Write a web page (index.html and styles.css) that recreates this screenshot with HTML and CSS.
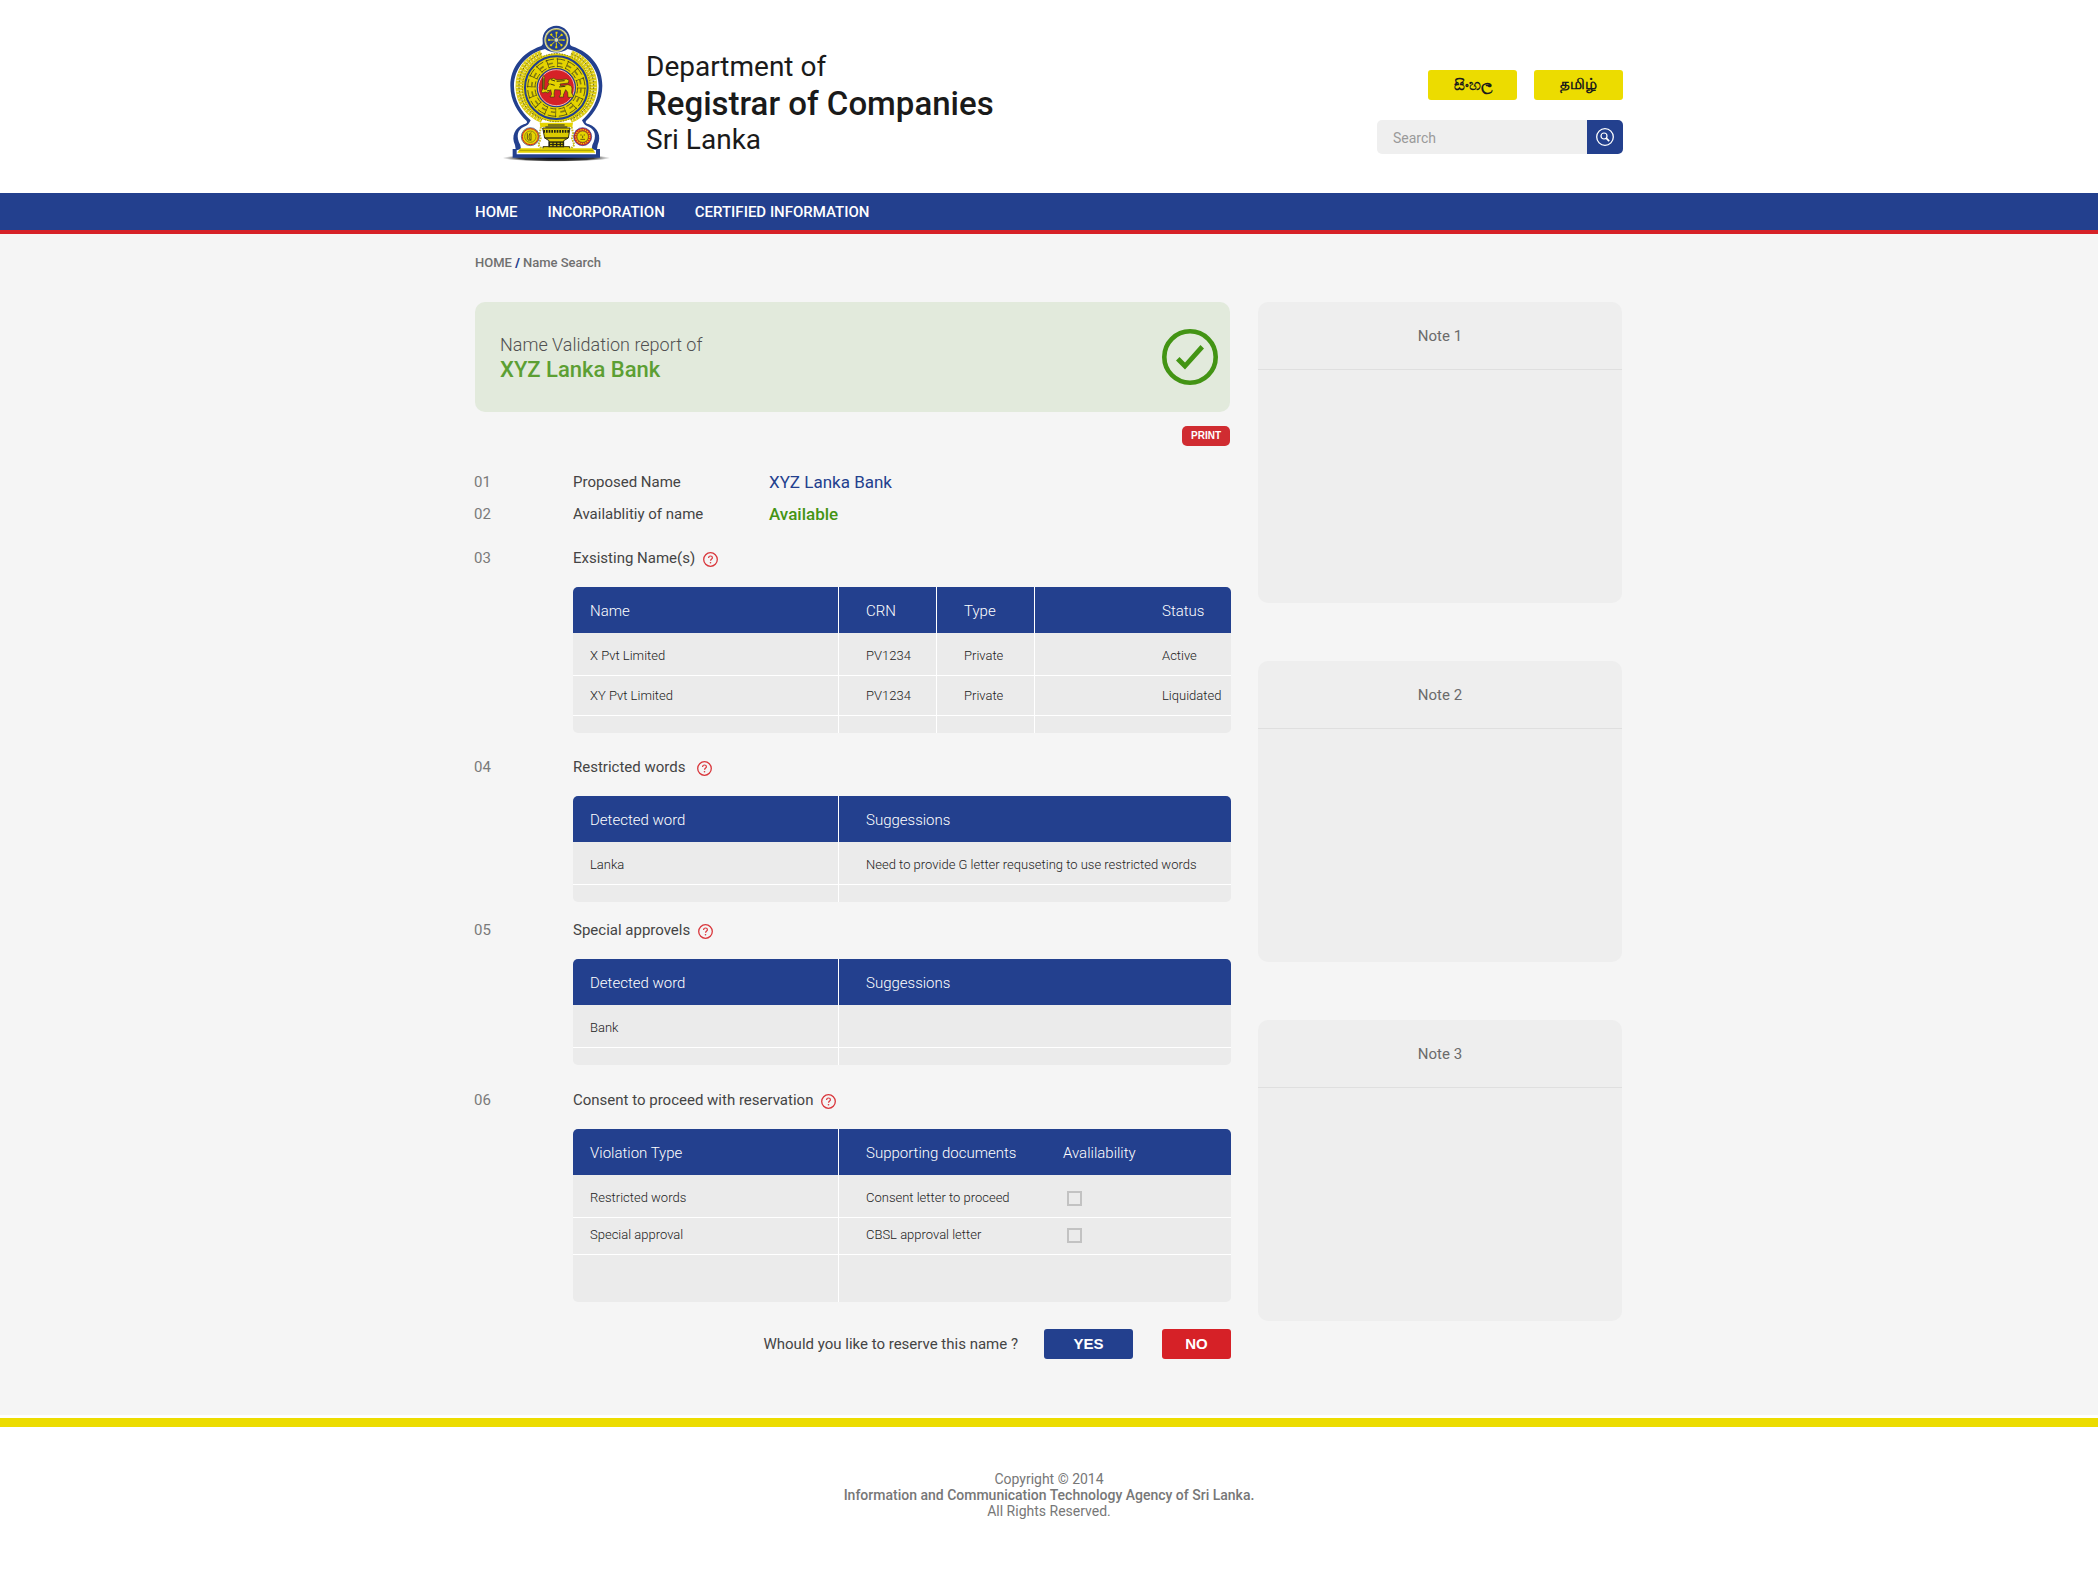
FILE: index.html
```html
<!DOCTYPE html>
<html lang="en">
<head>
<meta charset="utf-8">
<meta name="viewport" content="width=device-width, initial-scale=1">
<title>Name Search - Department of Registrar of Companies</title>
<link rel="stylesheet" href="styles.css">
</head>
<body>
<svg width="0" height="0" class="sprite" aria-hidden="true">
  <symbol id="help" viewBox="0 0 15 15">
    <circle cx="7.5" cy="7.5" r="6.8" fill="none" stroke="#d9363b" stroke-width="1.3"/>
    <path d="M5.600 5.900c0-1.200.8-1.900 1.900-1.900s1.900.7 1.900 1.700c0 1.300-1.800 1.400-1.800 3" fill="none" stroke="#d9363b" stroke-width="1.2"/>
    <circle cx="7.500" cy="10.700" r=".8" fill="#d9363b"/>
  </symbol>
</svg>

<header class="header">
  <div class="wrap header-row">
    <a class="brand" href="#">
      <svg class="emblem" viewBox="0 0 420 510" role="img" aria-label="Emblem of Sri Lanka">
        <defs>
          <radialGradient id="shadow"><stop offset="0" stop-color="#000"/><stop offset=".7" stop-color="#222" stop-opacity=".9"/><stop offset="1" stop-color="#555" stop-opacity="0"/></radialGradient>
        </defs>
        <ellipse cx="199" cy="444" rx="162" ry="11" fill="url(#shadow)"/>
        <path d="M158 95C155 66 176 47 199 47s44 19 41 48c-1 7 0 11 6 14 60 20 91 66 91 118 0 45-22 80-49 106-3 5 0 8 9 10 27 10 38 37 26 62l-2 12h9v26H68v-26h9l-2-12c-12-25-1-52 26-62 9-2 12-5 9-10-27-26-49-61-49-106 0-52 33-98 91-118 6-3 7-7 6-14z" fill="#23408e"/>
        <path d="M165 117c-54 13-93 58-93 111 0 42 20 75 50 103-7 14-10 16-20 19-20 9-25 29-11 55l2 12-13 4v12h238v-12l-13-4 2-12c14-26 9-46-11-55-10-3-13-5-20-19 30-28 50-61 50-103 0-53-39-98-93-111-18 14-50 14-68 0z" fill="#fff"/>
        <circle cx="199" cy="90" r="36" fill="#d8d7b2"/>
        <circle cx="199" cy="90" r="32" fill="#23408e" stroke="#d9cc1c" stroke-width="2"/>
        <g stroke="#e5d400" stroke-width="3"><path d="M199 68v44M177 90h44M184 75l30 30M184 105l30-30"/></g>
        <circle cx="199" cy="90" r="22" fill="none" stroke="#e5d400" stroke-width="6" stroke-dasharray="6 11.28" stroke-dashoffset="3"/>
        <circle cx="199" cy="90" r="7" fill="#d8d7b2" stroke="#23408e" stroke-width="2"/>
        <g fill="none">
          <path d="M155 131C108 148 86 188 87 232c2 45 28 77 70 97M243 131c47 17 69 57 68 101-2 45-28 77-70 97" stroke="#dccb12" stroke-width="21"/>
          <path d="M155 131C108 148 86 188 87 232c2 45 28 77 70 97M243 131c47 17 69 57 68 101-2 45-28 77-70 97" stroke="#f6f3c4" stroke-width="17" stroke-dasharray="2 8"/>
          <path d="M155 131C108 148 86 188 87 232c2 45 28 77 70 97M243 131c47 17 69 57 68 101-2 45-28 77-70 97" stroke="#6e6a19" stroke-width="3" stroke-dasharray="5 5"/>
        </g>
        <circle cx="199" cy="233" r="103" fill="#e5d400"/>
        <circle cx="199" cy="233" r="102" fill="none" stroke="#77711c" stroke-width="3" stroke-dasharray="4 4"/>
        <circle cx="199" cy="233" r="94" fill="#e5d400" stroke="#23408e" stroke-width="6"/>
        <circle cx="199" cy="233" r="86" fill="none" stroke="#625d17" stroke-width="3" stroke-dasharray="26 7.77"/>
        <circle cx="199" cy="233" r="64" fill="none" stroke="#625d17" stroke-width="3" stroke-dasharray="18 7.13"/>
        <circle cx="199" cy="233" r="75" fill="none" stroke="#474512" stroke-width="27" stroke-dasharray="2 27.45"/>
        <circle cx="199" cy="233" r="74" fill="none" stroke="#837b13" stroke-width="5" stroke-dasharray="16 13.06"/>
        <circle cx="199" cy="233" r="57" fill="#d62127" stroke="#23408e" stroke-width="4"/>
        <circle cx="199" cy="233" r="54" fill="none" stroke="#fff" stroke-width="2"/>
        <path d="M159 196l5 6-2 36h8c1-8 4-13 8-15l-4-6 4-9 13-3 10 5 29-3 7 4-2 8-25 3 2 6 20-4c7 0 12 3 14 10l-1 15 6 11-5 2h-12l-1-15-6-8-7 16 1 6h-14l5-8-1-13-17-1-2 12 1 10h-13l5-8-3-14-8 10-8-3-8 3-4-5 4-6z" fill="#e5d400" stroke="#3b3610" stroke-width="2" stroke-linejoin="round"/>
        <path d="M183 209l12 4M200 214l24-2M181 222l13 4M207 231l19-2M171 243l8-2M159 205v32" fill="none" stroke="#403910" stroke-width="3"/>
        <path d="M149 338h100l-2 13H151z" fill="#e5d400"/>
        <path d="M174 345h50M166 351h66" stroke="#5c5718" stroke-width="4"/>
        <path d="M158 354h82l-5 30-14 8v18h18v8h-80v-8h18v-18l-13-8z" fill="#dccb00" stroke="#38340f" stroke-width="3"/>
        <path d="M160 364h78" stroke="#262511" stroke-width="8" stroke-dasharray="5 3"/>
        <path d="M164 384h70" stroke="#262511" stroke-width="4"/>
        <path d="M176 394h46v18h-46z" fill="#262511"/>
        <path d="M180 400h38M180 407h38" stroke="#e5d400" stroke-width="3" stroke-dasharray="7 4"/>
        <path d="M153 351l-4 18 3 16-7 20 9 10M245 351l4 18-3 16 7 20-9 10" fill="none" stroke="#c9bc25" stroke-width="6" stroke-dasharray="5 3"/>
        <g>
          <circle cx="121" cy="380" r="27" fill="#e5d400" stroke="#23408e" stroke-width="2"/>
          <circle cx="121" cy="380" r="24" fill="none" stroke="#d62127" stroke-width="3"/>
          <circle cx="121" cy="380" r="17" fill="none" stroke="#6c651d" stroke-width="2"/>
          <path d="M124 367c-8 4-10 19 0 25M112 370v19M123 371v19h-9" fill="none" stroke="#625b13" stroke-width="3"/>
          <circle cx="278" cy="380" r="27" fill="#d62127" stroke="#23408e" stroke-width="2"/>
          <circle cx="278" cy="380" r="21" fill="none" stroke="#e5d400" stroke-width="4" stroke-dasharray="4 3"/>
          <circle cx="278" cy="380" r="17" fill="#e5d400" stroke="#6c651d" stroke-width="2"/>
          <path d="M271 375h4M281 375h4M278 377v7M271 388h14" stroke="#625b13" stroke-width="3"/>
        </g>
        <path d="M91 415h216l9 13H82z" fill="#e5d400"/>
        <path d="M88 421h222" stroke="#887e0e" stroke-width="2"/>
      </svg>
      <span class="brand-name"><span>Department of</span><strong>Registrar of Companies</strong><span>Sri Lanka</span></span>
    </a>
    <div class="tools">
      <div class="langs">
        <button class="lang" type="button" lang="si">සිංහල</button>
        <button class="lang" type="button" lang="ta">தமிழ்</button>
      </div>
      <form class="search" role="search">
        <input class="search-input" type="search" placeholder="Search" aria-label="Search">
        <button class="search-button" type="button" aria-label="Search">
          <svg width="18" height="18" viewBox="0 0 18 18" fill="none" stroke="#fff"><circle cx="9" cy="9" r="8.300" stroke-width="1.3"/><circle cx="8" cy="8" r="3" stroke-width="1.2"/><path d="M10.200 10.200l3 3" stroke-width="1.800"/></svg>
        </button>
      </form>
    </div>
  </div>
</header>

<nav class="nav" aria-label="Main">
  <div class="wrap nav-row">
    <a href="#">HOME</a>
    <a href="#">INCORPORATION</a>
    <a href="#">CERTIFIED INFORMATION</a>
  </div>
</nav>

<main class="main">
  <div class="wrap">
    <nav class="crumbs" aria-label="Breadcrumb"><a href="#">HOME</a> <b>/</b> <span>Name Search</span></nav>
    <div class="columns">
      <div class="report">
        <section class="banner">
          <h1 class="banner-text"><span class="banner-lead">Name Validation report of</span><span class="banner-name">XYZ Lanka Bank</span></h1>
          <svg width="56" height="56" viewBox="0 0 56 56" aria-hidden="true"><circle cx="28" cy="28" r="25.700" fill="none" stroke="#439414" stroke-width="4.600"/><path d="M14 31.500l3.500-3.500 5.500 5.500L38.500 16l3.500 3.500L23 40.500z" fill="#439414"/></svg>
        </section>
        <div class="print-row"><button class="print" type="button">PRINT</button></div>

        <div class="item facts">
          <span class="num">01</span><span class="label">Proposed Name</span><span class="value">XYZ Lanka Bank</span>
          <span class="num">02</span><span class="label">Availablitiy of name</span><span class="value value-ok">Available</span>
        </div>

        <section class="item existing">
          <span class="num">03</span>
          <div class="body">
            <h2 class="label">Exsisting Name(s) <svg class="help"><use href="#help"/></svg></h2>
            <table class="grid">
              <colgroup><col class="c-first"><col class="c-mid"><col class="c-mid"><col></colgroup>
              <thead><tr><th>Name</th><th>CRN</th><th>Type</th><th class="status">Status</th></tr></thead>
              <tbody>
                <tr><td>X Pvt Limited</td><td>PV1234</td><td>Private</td><td class="status">Active</td></tr>
                <tr><td>XY Pvt Limited</td><td>PV1234</td><td>Private</td><td class="status">Liquidated</td></tr>
                <tr class="blank"><td></td><td></td><td></td><td></td></tr>
              </tbody>
            </table>
          </div>
        </section>

        <section class="item restricted">
          <span class="num">04</span>
          <div class="body">
            <h2 class="label">Restricted words <svg class="help help-wide"><use href="#help"/></svg></h2>
            <table class="grid">
              <colgroup><col class="c-first"><col></colgroup>
              <thead><tr><th>Detected word</th><th>Suggessions</th></tr></thead>
              <tbody>
                <tr><td>Lanka</td><td>Need to provide G letter requseting to use restricted words</td></tr>
                <tr class="blank"><td></td><td></td></tr>
              </tbody>
            </table>
          </div>
        </section>

        <section class="item special">
          <span class="num">05</span>
          <div class="body">
            <h2 class="label">Special approvels <svg class="help"><use href="#help"/></svg></h2>
            <table class="grid">
              <colgroup><col class="c-first"><col></colgroup>
              <thead><tr><th>Detected word</th><th>Suggessions</th></tr></thead>
              <tbody>
                <tr><td>Bank</td><td></td></tr>
                <tr class="blank"><td></td><td></td></tr>
              </tbody>
            </table>
          </div>
        </section>

        <section class="item consent">
          <span class="num">06</span>
          <div class="body">
            <h2 class="label">Consent to proceed with reservation <svg class="help"><use href="#help"/></svg></h2>
            <table class="grid">
              <colgroup><col class="c-first"><col class="c-doc"><col></colgroup>
              <thead><tr><th>Violation Type</th><th>Supporting documents</th><th class="avail">Avalilability</th></tr></thead>
              <tbody>
                <tr><td>Restricted words</td><td><label for="consent-letter">Consent letter to proceed</label></td><td class="avail"><input class="tick" type="checkbox" id="consent-letter"></td></tr>
                <tr class="short"><td>Special approval</td><td><label for="cbsl-letter">CBSL approval letter</label></td><td class="avail"><input class="tick" type="checkbox" id="cbsl-letter"></td></tr>
                <tr class="tall"><td></td><td></td><td class="avail"></td></tr>
              </tbody>
            </table>
          </div>
        </section>

        <div class="reserve">
          <span class="label">Whould you like to reserve this name ?</span>
          <button class="answer yes" type="button">YES</button>
          <button class="answer no" type="button">NO</button>
        </div>
      </div>

      <aside class="notes">
        <section class="note"><h2>Note 1</h2></section>
        <section class="note"><h2>Note 2</h2></section>
        <section class="note"><h2>Note 3</h2></section>
      </aside>
    </div>
  </div>
</main>

<footer class="footer">
  <p>Copyright © 2014<br><strong>Information and Communication Technology Agency of Sri Lanka.</strong><br>All Rights Reserved.</p>
</footer>
</body>
</html>
```
FILE: styles.css
```css
:root {
  --blue: #23408e;
  --red: #d62127;
  --yellow: #ecdc00;
  --green: #439414;
}

* { box-sizing: border-box; }

body {
  margin: 0;
  background: #fff;
  color: #444;
  font: 400 15px/20px Roboto, sans-serif;
}

a { color: inherit; text-decoration: none; }
button { border: 0; padding: 0; font-family: inherit; cursor: pointer; }
h1, h2, p { margin: 0; font-weight: 400; }
.sprite { position: absolute; }

.wrap {
  max-width: 1148px;
  margin: 0 auto;
}

/* Header */
.header-row {
  display: flex;
  justify-content: space-between;
  padding: 10px 0 13px;
}
.brand {
  display: flex;
  gap: 16px;
  padding-left: 15px;
  color: #1a1a1a;
}
.emblem { width: 140px; height: 170px; }
.brand-name {
  display: flex;
  flex-direction: column;
  padding-top: 39px;
  font-size: 28px;
  line-height: 36px;
}
.brand-name strong { font-size: 33px; font-weight: 500; line-height: 37px; }

.tools {
  display: flex;
  flex-direction: column;
  align-items: flex-end;
  gap: 20px;
  padding-top: 60px;
}
.langs { display: flex; gap: 17px; }
.lang {
  width: 89px;
  height: 30px;
  border-radius: 3px;
  background: var(--yellow);
  color: #1a1a1a;
  font-size: 15px;
  font-weight: 700;
}
.search { display: flex; height: 34px; }
.search-input {
  width: 210px;
  border: 0;
  border-radius: 5px 0 0 5px;
  padding: 2px 15px 0 16px;
  background: #efefef;
  font: 400 14px/20px Roboto, sans-serif;
}
.search-input::placeholder { color: #9a9a9a; opacity: 1; }
.search-button {
  display: flex;
  align-items: center;
  justify-content: center;
  width: 36px;
  border-radius: 0 5px 5px 0;
  background: var(--blue);
}

/* Navigation */
.nav {
  border-bottom: 4px solid var(--red);
  background: var(--blue);
}
.nav-row {
  display: flex;
  gap: 30px;
  padding: 9px 0 8px;
  color: #fff;
  font-weight: 500;
}

/* Main area */
.main {
  border-bottom: 3px solid #fff;
  padding: 19px 0 56px;
  background: #f5f5f5;
}
.crumbs {
  margin-bottom: 29px;
  color: #707070;
  font-size: 13px;
  font-weight: 500;
}
.crumbs b { color: var(--blue); font-weight: 900; }
.columns {
  display: grid;
  grid-template-columns: 756px 364px;
  gap: 27px;
}

.banner {
  display: flex;
  align-items: center;
  justify-content: space-between;
  height: 110px;
  margin-right: 1px;
  border-radius: 10px;
  padding: 0 12px 0 25px;
  background: #e2eadc;
}
.banner-text { display: flex; flex-direction: column; padding-top: 2px; }
.banner-lead { color: #505050; font-size: 18px; font-weight: 300; line-height: 24px; }
.banner-name { color: #5c9f33; font-size: 22px; font-weight: 500; line-height: 26px; }

.print-row { display: flex; justify-content: flex-end; padding: 14px 1px 0 0; }
.print {
  width: 48px;
  height: 20px;
  border-radius: 5px;
  background: #d02c31;
  color: #fff;
  font: 700 10px/20px "Liberation Sans", sans-serif;
}

.item {
  display: grid;
  grid-template-columns: 99px 1fr;
  margin-left: -1px;
}
.num { color: #7a7a7a; }
.label { color: #444; font-size: 15px; line-height: 20px; }
.facts {
  grid-template-columns: 99px 196px 1fr;
  row-gap: 12px;
  padding-top: 26px;
}
.value { color: var(--blue); font-size: 17px; }
.value-ok { color: var(--green); font-weight: 500; }

.existing { padding-top: 24px; }
.restricted { padding-top: 24px; }
.special { padding-top: 18px; }
.consent { padding-top: 25px; }

h2.label { display: flex; align-items: center; gap: 8px; margin-bottom: 19px; }
.help { width: 15px; height: 15px; margin-top: 2px; }
.help-wide { margin-left: 4px; }

/* Tables */
.grid {
  width: 100%;
  border-collapse: separate;
  border-spacing: 0;
  table-layout: fixed;
  overflow: hidden;
  border-radius: 5px;
  background: #ebebeb;
  color: #222;
  font-size: 13px;
  font-weight: 300;
}
.c-first { width: 265px; }
.c-mid { width: 98px; }
.c-doc { width: 225px; }
.grid th {
  height: 46px;
  padding: 2px 0 0 27px;
  background: var(--blue);
  color: #fff;
  font-size: 15px;
  font-weight: 300;
  text-align: left;
}
.grid td {
  height: 40px;
  border-bottom: 1px solid #fff;
  padding: 0 0 0 27px;
  line-height: 20px;
}
.grid th + th, .grid td + td { border-left: 1px solid #fff; }
.grid th:first-child, .grid td:first-child { padding-left: 17px; }
.grid tbody tr:first-child td { height: 43px; padding-top: 4px; }
.grid tbody tr.short td { height: 37px; padding-bottom: 2px; }
.grid tbody tr:last-child td { height: 17px; border-bottom: 0; }
.grid tbody tr.tall td { height: 47px; }
.grid .status { padding-left: 127px; }
.grid th.avail, .grid td.avail { border-left: 0; padding-left: 0; }
.grid td.avail { padding-left: 4px; }

.tick {
  display: block;
  width: 15px;
  height: 15px;
  margin: 0;
  border: 2px solid #c2c2c2;
  background: transparent;
  appearance: none;
}

.reserve {
  display: flex;
  align-items: center;
  justify-content: flex-end;
  padding-top: 27px;
}
.answer {
  height: 30px;
  border-radius: 3px;
  color: #fff;
  font: 700 15px/30px "Liberation Sans", sans-serif;
}
.yes { width: 89px; margin: 0 29px 0 26px; background: var(--blue); }
.no { width: 69px; background: var(--red); }

/* Side notes */
.notes { display: flex; flex-direction: column; gap: 58px; }
.note {
  height: 301px;
  border-radius: 10px;
  background: #eee;
}
.note h2 {
  border-bottom: 1px solid #dfdfdf;
  padding: 24px 0 23px;
  color: #6b6b6b;
  font-size: 15px;
  line-height: 20px;
  text-align: center;
}

/* Footer */
.footer {
  border-top: 9px solid var(--yellow);
  padding: 44px 0 40px;
  color: #777;
  font-size: 14px;
  line-height: 16px;
  text-align: center;
}
.footer strong { font-weight: 500; }
```
